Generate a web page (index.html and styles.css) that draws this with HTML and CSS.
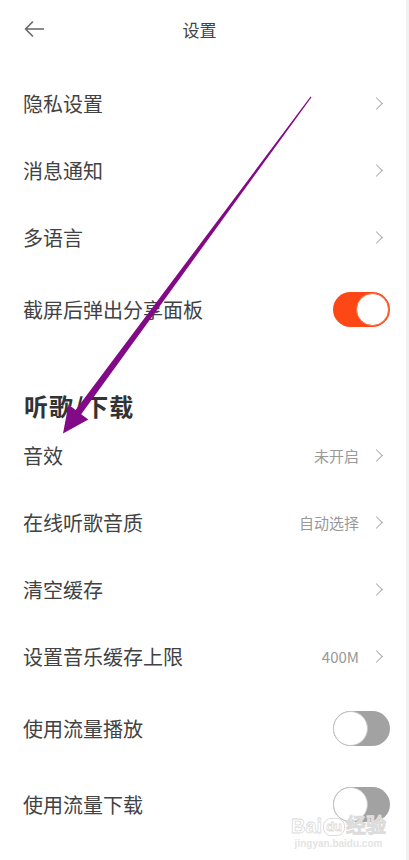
FILE: index.html
```html
<!DOCTYPE html>
<html lang="zh-CN">
<head>
<meta charset="UTF-8" />
<meta name="viewport" content="width=device-width, initial-scale=1" />
<title>设置</title>
<link rel="stylesheet" href="styles.css">
</head>
<body>
<div class="screen">
  <!-- Top bar -->
  <header class="nav">
    <svg class="back" width="20" height="16" viewBox="0 0 20 16">
      <path d="M19.5 8H1.5M8.5 1L1.5 8l7 7" fill="none" stroke="#666" stroke-width="1.6" stroke-linecap="round" stroke-linejoin="round"/>
    </svg>
    <div class="nav-title">设置</div>
    <div class="nav-spacer"></div>
  </header>

  <ul class="list first">
    <li class="row"><span class="label">隐私设置</span><span class="chev"></span></li>
    <li class="row"><span class="label">消息通知</span><span class="chev"></span></li>
    <li class="row"><span class="label">多语言</span><span class="chev"></span></li>
    <li class="row toggle-row"><span class="label">截屏后弹出分享面板</span><span class="switch on"><i></i></span></li>
  </ul>

  <h2 class="group">听歌/下载</h2>

  <ul class="list">
    <li class="row"><span class="label">音效</span><span class="value">未开启</span><span class="chev"></span></li>
    <li class="row"><span class="label">在线听歌音质</span><span class="value">自动选择</span><span class="chev"></span></li>
    <li class="row"><span class="label">清空缓存</span><span class="chev"></span></li>
    <li class="row"><span class="label">设置音乐缓存上限</span><span class="value">400M</span><span class="chev"></span></li>
    <li class="row toggle-row"><span class="label">使用流量播放</span><span class="switch"><i></i></span></li>
    <li class="row toggle-row"><span class="label">使用流量下载</span><span class="switch"><i></i></span></li>
  </ul>

  <!-- watermark -->
  <div class="mark">
    <div class="mark-logo">Bai<span class="paw">du</span>经验</div>
    <div class="mark-url">jingyan.baidu.com</div>
  </div>

  <!-- annotation arrow -->
  <svg class="arrow" width="409" height="860" viewBox="0 0 409 860">
    <polygon points="311.5,97.2 81.2,414.2 88.3,419.5 63,433.5 68.5,404.6 75.6,410 310.6,96.6" fill="#820a86"/>
  </svg>
</div>
</body>
</html>
```

FILE: styles.css
```css
* {
  margin: 0;
  padding: 0;
  box-sizing: border-box;
}
body {
  font-family: "Noto Sans CJK SC", "Noto Sans", sans-serif;
  background: #fff;
  color: #404040;
}
.screen {
  position: relative;
  width: 409px;
  height: 860px;
  overflow: hidden;
  border-right: 3px solid #f1f1f1;
}

/* Top bar */
.nav {
  display: flex;
  align-items: center;
  height: 58px;
  padding: 0 31px 0 24px;
}
.back {
  display: block;
  flex: 0 0 20px;
}
.nav-title {
  flex: 1;
  text-align: center;
  font-size: 17px;
  color: #444;
}
.nav-spacer {
  width: 20px;
}

/* Lists */
.list {
  list-style: none;
}
.list.first {
  padding-top: 12px;
}
.row {
  display: flex;
  align-items: center;
  height: 67px;
  padding: 0 23px;
}
.toggle-row {
  height: 76px;
  padding-right: 16px;
}
.label {
  flex: 1;
  font-size: 20px;
  color: #424242;
  white-space: nowrap;
}
.value {
  font-size: 15px;
  color: #999;
  margin-right: 17px;
}
.chev {
  width: 7px;
  height: 12px;
  position: relative;
}
.chev::before {
  content: "";
  position: absolute;
  left: -4px;
  top: 1px;
  width: 8px;
  height: 8px;
  border-top: 1.6px solid #aaa;
  border-right: 1.6px solid #aaa;
  transform: rotate(45deg);
}

.group {
  font-size: 24px;
  font-weight: 700;
  color: #333;
  line-height: 30px;
  padding: 44px 0 1px 24px;
  letter-spacing: 1px;
}

/* Switches */
.switch {
  position: relative;
  width: 57px;
  height: 35px;
  border-radius: 18px;
  background: #a2a2a2;
}
.switch i {
  position: absolute;
  left: 0;
  top: 0;
  width: 35px;
  height: 35px;
  border-radius: 50%;
  background: #fff;
  border: 1px solid #c4c4c4;
}
.switch.on {
  background: #fd4816;
}
.switch.on i {
  left: 23px;
  top: 1px;
  width: 33px;
  height: 33px;
  border-color: #fd6a40;
}

/* Watermark */
.mark {
  position: absolute;
  left: 291px;
  top: 815px;
  text-align: center;
  font-family: "Liberation Sans", sans-serif;
}
.mark-logo {
  font-size: 20px;
  font-weight: 700;
  line-height: 22px;
  color: #fff;
  -webkit-text-stroke: 0.8px #dcdcdc;
}
.paw {
  display: inline-block;
  font-size: 13px;
  line-height: 14px;
  padding: 1px 2px;
  margin: 0 1px;
  border: 1px solid #dcdcdc;
  border-radius: 8px;
  vertical-align: 2px;
}
.mark-url {
  font-size: 10px;
  font-weight: 700;
  color: #e4e4e4;
  margin-top: 1px;
}

/* Annotation overlay */
.arrow {
  position: absolute;
  left: 0;
  top: 0;
  pointer-events: none;
}
```
